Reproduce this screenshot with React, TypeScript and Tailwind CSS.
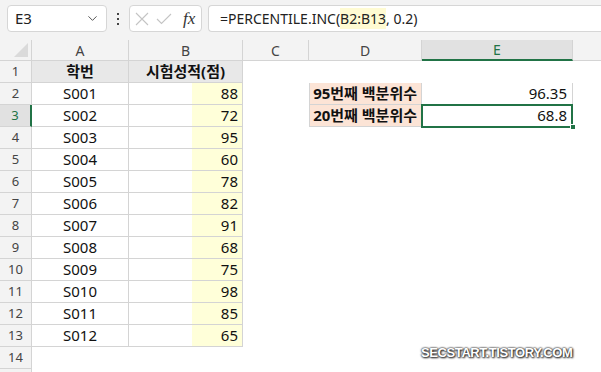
import { ChevronDown } from 'lucide-react';

const font = { fontFamily: '"Noto Sans", "Noto Sans CJK KR", sans-serif' };

const students = [
  ['S001', 88],
  ['S002', 72],
  ['S003', 95],
  ['S004', 60],
  ['S005', 78],
  ['S006', 82],
  ['S007', 91],
  ['S008', 68],
  ['S009', 75],
  ['S010', 98],
  ['S011', 85],
  ['S012', 65],
];

function RowHead({ n, active }: { n?: number; active?: boolean }) {
  return (
    <div
      className={
        active
          ? 'flex items-center justify-center border-b border-r-2 border-b-[#d4d4d4] border-r-[#217346] bg-[#e1e1e1] text-[13px] text-[#217346]'
          : 'flex items-center justify-center border-b border-r border-[#d4d4d4] bg-[#f3f3f3] text-[13px] text-[#444]'
      }
    >
      {n}
    </div>
  );
}

function Toolbar() {
  return (
    <div className="flex h-[40px] items-start gap-0 bg-[#f3f3f3] pt-[5px]">
      <div className="ml-[7px] flex h-[27px] w-[100px] items-center justify-between rounded-[4px] border border-[#d6d6d6] bg-white pl-[7px] pr-[6px] text-[15px] text-[#222]">
        <span>E3</span>
        <ChevronDown className="h-[15px] w-[15px] text-[#555]" strokeWidth={1.6} />
      </div>
      <div className="flex h-[27px] w-[22px] flex-col items-center justify-center gap-[3px]">
        <span className="h-[2px] w-[2px] bg-[#444]" />
        <span className="h-[2px] w-[2px] bg-[#444]" />
        <span className="h-[2px] w-[2px] bg-[#444]" />
      </div>
      <div className="flex h-[27px] w-[73px] items-center gap-[7px] rounded-[4px] border border-[#d6d6d6] bg-white pl-[5px]">
        <svg width="14" height="14" viewBox="0 0 14 14" stroke="#c4c4c4" strokeWidth="1.1" fill="none">
          <path d="M1 1 L13 13 M13 1 L1 13" />
        </svg>
        <svg width="16" height="12" viewBox="0 0 16 12" stroke="#c4c4c4" strokeWidth="1.1" fill="none">
          <path d="M1 6 L5.5 10.5 L15 1" />
        </svg>
        <span
          className="ml-[4px] text-[17px] italic text-[#333]"
          style={{ fontFamily: '"Liberation Serif", serif' }}
        >
          fx
        </span>
      </div>
      <div className="ml-[6px] flex h-[27px] flex-1 items-center rounded-l-[4px] border border-r-0 border-[#d6d6d6] bg-white pl-[11px] text-[14px] text-[#222]">
        <span>=PERCENTILE.INC(</span>
        <span className="bg-[#fffbd2]">B2:B13</span>
        <span>, 0.2)</span>
      </div>
    </div>
  );
}

export default function App() {
  const cell = 'flex items-center border-b border-r border-[#d4d4d4] text-[15px] text-[#111]';
  const blank = 'h-[22px]';

  return (
    <div className="relative h-[372px] w-[601px] overflow-hidden bg-white" style={font}>
      <Toolbar />
      <div className="grid grid-cols-[32px_97px_114px_66px_113px_151px_1fr] grid-rows-[21px] auto-rows-[22px]">
        {/* column headers */}
        <div className="relative border-b border-r border-[#d4d4d4] bg-[#f3f3f3]">
          <div
            className="absolute bottom-[3px] right-[3px] h-[14px] w-[14px] bg-[#dadada]"
            style={{ clipPath: 'polygon(100% 0, 100% 100%, 0 100%)' }}
          />
        </div>
        {['A', 'B', 'C', 'D'].map((c) => (
          <div
            key={c}
            className="flex items-center justify-center border-b border-r border-[#d4d4d4] bg-[#f3f3f3] text-[14px] text-[#444]"
          >
            {c}
          </div>
        ))}
        <div className="flex items-center justify-center border-b-2 border-r border-b-[#217346] border-r-[#d4d4d4] bg-[#e1e1e1] text-[14px] text-[#217346]">
          E
        </div>
        <div className="border-b border-[#d4d4d4] bg-[#f3f3f3]" />

        {/* row 1 */}
        <RowHead n={1} />
        <div className={`${cell} justify-center bg-[#e8e8e8] font-bold`}>학번</div>
        <div className={`${cell} justify-center bg-[#e8e8e8] font-bold`}>시험성적(점)</div>
        <div className={blank} />
        <div className={blank} />
        <div className={blank} />
        <div className={blank} />

        {students.map(([id, score], i) => {
          const row = i + 2;
          return (
            <div key={id} className="contents">
              <RowHead n={row} active={row === 3} />
              <div className={`${cell} justify-center`}>{id}</div>
              <div className={`${cell} justify-end`}>
                <span className="flex h-full w-[50px] items-center justify-end bg-[#ffffd9] pr-[4px]">
                  {score}
                </span>
              </div>
              <div className={blank} />
              {row === 2 && (
                <>
                  <div className={`${cell} border-l justify-end bg-[#fce4d6] pr-[4px] text-[14px] font-bold`}>
                    95번째 백분위수
                  </div>
                  <div className={`${cell} justify-end pr-[5px]`}>96.35</div>
                </>
              )}
              {row === 3 && (
                <>
                  <div className={`${cell} border-l justify-end bg-[#fce4d6] pr-[4px] text-[14px] font-bold`}>
                    20번째 백분위수
                  </div>
                  <div className={`${cell} relative justify-end pr-[5px]`}>
                    68.8
                    <div className="absolute -left-[1px] -top-[1px] h-[24px] w-[152px] border-2 border-[#217346]" />
                    <div className="absolute -bottom-[4px] -right-[4px] h-[6px] w-[6px] border border-white bg-[#217346]" />
                  </div>
                </>
              )}
              {row > 3 && (
                <>
                  <div className={blank} />
                  <div className={blank} />
                </>
              )}
              <div className={blank} />
            </div>
          );
        })}

        <RowHead n={14} />
        <div className={blank} />
        <div className={blank} />
        <div className={blank} />
        <div className={blank} />
        <div className={blank} />
        <div className={blank} />
        <RowHead />
      </div>

      <div
        className="absolute left-[421px] top-[343px] text-[13px] font-bold tracking-[-0.4px] text-white"
        style={{
          fontFamily: '"Liberation Sans", sans-serif',
          textShadow: '0 0 2px #333, 0 0 2px #333, 1px 1px 2px #222',
        }}
      >
        SECSTART.TISTORY.COM
      </div>
    </div>
  );
}
